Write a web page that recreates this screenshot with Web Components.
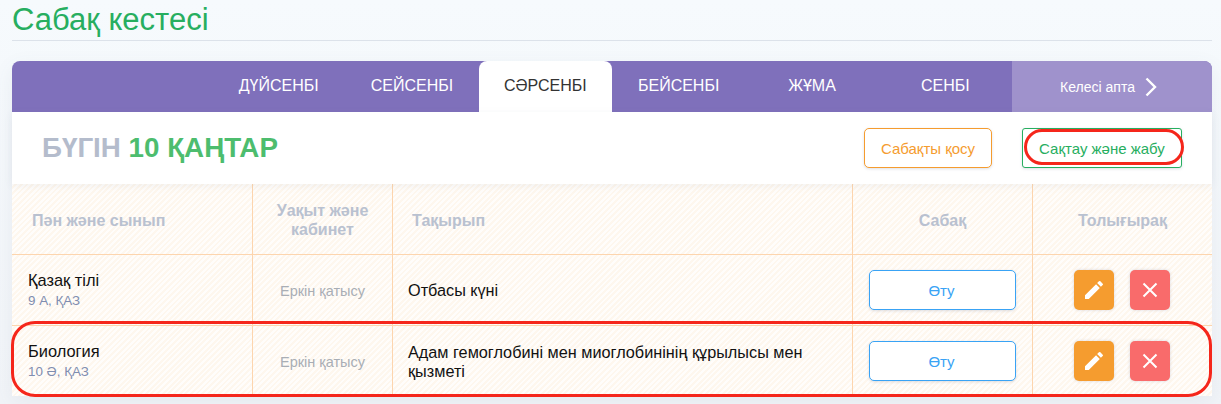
<!DOCTYPE html>
<html lang="kk">
<head>
<meta charset="utf-8">
<title>Сабақ кестесі</title>
<style>
  html, body { margin: 0; height: 404px; overflow: hidden; }
  body {
    background: linear-gradient(#f6fafd, #f1f4f8);
    font-family: "Liberation Sans", Arial, sans-serif;
  }
</style>
</head>
<body>
<schedule-page heading="Сабақ кестесі">
  <week-tabs next="Келесі апта">
    <day-tab>ДҮЙСЕНБІ</day-tab>
    <day-tab>СЕЙСЕНБІ</day-tab>
    <day-tab active>СӘРСЕНБІ</day-tab>
    <day-tab>БЕЙСЕНБІ</day-tab>
    <day-tab>ЖҰМА</day-tab>
    <day-tab>СЕНБІ</day-tab>
  </week-tabs>
  <today-bar label="БҮГІН" date="10 ҚАҢТАР">
    <outline-button color="#f59c2f" width="128">Сабақты қосу</outline-button>
    <outline-button color="#27ae60" width="160" square circled>Сақтау және жабу</outline-button>
  </today-bar>
  <lesson-table>
    <lesson-row subject="Қазақ тілі" group="9 А, ҚАЗ" place="Еркін қатысу" topic="Отбасы күні"></lesson-row>
    <lesson-row circled subject="Биология" group="10 Ә, ҚАЗ" place="Еркін қатысу" topic="Адам гемоглобині мен миоглобинінің құрылысы мен қызметі"></lesson-row>
  </lesson-table>
</schedule-page>

<script>
const COLS = '240px 1px 139px 1px 459px 1px 179px 1px 179px';

class SchedulePage extends HTMLElement {
  connectedCallback() {
    this.attachShadow({ mode: 'open' }).innerHTML = `
      <style>
        :host { display: block; padding: 0 9px 0 12px; }
        h1 {
          margin: 0; height: 40px; box-sizing: content-box;
          font: 400 31px/40px "Liberation Sans", Arial, sans-serif;
          color: #27ae60; border-bottom: 1px solid #dce2ea;
        }
        .card {
          margin-top: 20px; border-radius: 8px 8px 0 0;
          box-shadow: 0 6px 20px rgba(90, 100, 130, .08);
        }
      </style>
      <h1>${this.getAttribute('heading')}</h1>
      <div class="card"><slot></slot></div>`;
  }
}

class WeekTabs extends HTMLElement {
  connectedCallback() {
    this.attachShadow({ mode: 'open' }).innerHTML = `
      <style>
        :host {
          display: flex; height: 51px; padding-left: 200px;
          background: #7f70bb; border-radius: 8px 8px 0 0; overflow: hidden;
        }
        .days { flex: 1; display: grid; grid-template-columns: repeat(6, 1fr); }
        .next {
          width: 200px; background: #9f92cc; color: #fff;
          display: flex; align-items: center; justify-content: center; gap: 9px;
          font-size: 14px; padding-right: 6px; box-sizing: border-box;
        }
        svg { display: block; }
      </style>
      <div class="days"><slot></slot></div>
      <div class="next">${this.getAttribute('next')}
        <svg width="14" height="20" viewBox="0 0 14 20" fill="none" stroke="#fff" stroke-width="2.4">
          <path d="M2.5 1.5 L11 10 L2.5 18.5"/>
        </svg>
      </div>`;
  }
}

class DayTab extends HTMLElement {
  connectedCallback() {
    this.attachShadow({ mode: 'open' }).innerHTML = `
      <style>
        :host {
          display: flex; align-items: center; justify-content: center;
          font-size: 16px; color: #fff; padding-bottom: 2px; box-sizing: border-box;
        }
        :host([active]) { background: #fff; color: #333; border-radius: 8px 8px 0 0; }
      </style>
      <slot></slot>`;
  }
}

class TodayBar extends HTMLElement {
  connectedCallback() {
    this.attachShadow({ mode: 'open' }).innerHTML = `
      <style>
        :host {
          display: flex; align-items: center; height: 72px; background: #fff;
          padding: 0 30px 0 30px; box-sizing: border-box; position: relative;
          box-shadow: 0 2px 8px rgba(90, 100, 130, .08);
        }
        .date { flex: 1; font-size: 27.75px; font-weight: 700; color: #b4bccc; padding-bottom: 1px; }
        .date b { color: #4dbd6e; }
        .btns { display: flex; gap: 30px; }
      </style>
      <div class="date">${this.getAttribute('label')} <b>${this.getAttribute('date')}</b></div>
      <div class="btns"><slot></slot></div>`;
  }
}

class OutlineButton extends HTMLElement {
  connectedCallback() {
    const color = this.getAttribute('color');
    this.attachShadow({ mode: 'open' }).innerHTML = `
      <style>
        :host {
          display: flex; align-items: center; justify-content: center; position: relative;
          width: ${this.getAttribute('width')}px; height: 40px; box-sizing: border-box;
          background: #fff; border: 1px solid ${color}; color: ${color};
          border-radius: 5px; font-size: 15px;
          box-shadow: 0 1px 3px rgba(90, 100, 130, .2);
        }
        :host([square]) { border-radius: 3px; }
        .ring {
          position: absolute; left: 1px; right: -3px; top: 0; bottom: 2px;
          border: 3px solid #f5261b; border-radius: 19px;
        }
      </style>
      <slot></slot>
      ${this.hasAttribute('circled') ? '<div class="ring"></div>' : ''}`;
  }
}

class LessonTable extends HTMLElement {
  connectedCallback() {
    this.attachShadow({ mode: 'open' }).innerHTML = `
      <style>
        :host {
          display: block;
          background: repeating-linear-gradient(135deg, #fffdfb 0 2px, #fef7ee 2px 4px);
          font-size: 16px;
        }
        .head {
          display: grid; grid-template-columns: ${COLS}; height: 70px;
          font-weight: 700; color: #b9c1d0; border-bottom: 1px solid #fdd5ae;
        }
        .head > div { display: flex; align-items: center; justify-content: center; text-align: center; line-height: 19px; padding-top: 2px; box-sizing: border-box; }
        .head > .l { justify-content: flex-start; text-align: left; padding-left: 20px; }
        .head > .topic { padding-left: 19px; }
        .head > .sep { background: #fdd5ae; padding: 0; }
      </style>
      <div class="head">
        <div class="l">Пән және сынып</div><div class="sep"></div>
        <div>Уақыт және<br>кабинет</div><div class="sep"></div>
        <div class="l topic">Тақырып</div><div class="sep"></div>
        <div>Сабақ</div><div class="sep"></div>
        <div>Толығырақ</div>
      </div>
      <slot></slot>`;
  }
}

class LessonRow extends HTMLElement {
  connectedCallback() {
    const a = n => this.getAttribute(n);
    this.attachShadow({ mode: 'open' }).innerHTML = `
      <style>
        :host {
          display: grid; grid-template-columns: ${COLS}; height: 71px; box-sizing: border-box;
          border-bottom: 1px solid #fdd5ae; position: relative;
        }
        :host(:last-child) { border-bottom: 0; height: 70px; }
        .sep { background: #fdd5ae; }
        .cell { display: flex; align-items: center; justify-content: center; }
        .subject { flex-direction: column; align-items: flex-start; padding-left: 16px; box-sizing: border-box; }
        .name { font-size: 16.4px; line-height: 20px; color: #111; }
        .group { font-size: 13.4px; line-height: 19px; color: #7f8db0; margin-top: 1px; }
        .place { font-size: 14.5px; color: #a9aeb5; padding-top: 2px; box-sizing: border-box; }
        .topic { justify-content: flex-start; padding: 1px 40px 0 15px; font-size: 16.25px; line-height: 19px; color: #111; box-sizing: border-box; }
        .go {
          width: 147px; height: 40px; box-sizing: border-box; display: flex;
          align-items: center; justify-content: center; margin-bottom: 1px; padding: 1px 2px 0 0;
          background: #fff; border: 1px solid #39a3f5; border-radius: 5px; color: #39a3f5; font-size: 15px;
          box-shadow: 0 1px 3px rgba(90, 100, 130, .2);
        }
        .tools { gap: 16px; margin-bottom: 1px; padding-right: 2px; box-sizing: border-box; }
        .tool {
          width: 40px; height: 40px; border-radius: 5px; display: flex;
          align-items: center; justify-content: center;
          box-shadow: 0 0 3px rgba(90, 100, 130, .25);
        }
        .edit { background: #f59c2f; }
        .del { background: #f96b6b; }
        .ring {
          position: absolute; left: -1px; right: 0; top: -5px; bottom: -1px;
          border: 3px solid #f5261b; border-radius: 24px; pointer-events: none;
        }
      </style>
      <div class="cell subject"><div class="name">${a('subject')}</div><div class="group">${a('group')}</div></div>
      <div class="sep"></div>
      <div class="cell place">${a('place')}</div>
      <div class="sep"></div>
      <div class="cell topic"><div>${a('topic')}</div></div>
      <div class="sep"></div>
      <div class="cell"><div class="go">Өту</div></div>
      <div class="sep"></div>
      <div class="cell tools">
        <div class="tool edit">
          <svg width="24" height="24" viewBox="0 0 24 24" fill="#fff"><path d="M3 17.25V21h3.75L17.81 9.94l-3.75-3.75L3 17.25zM20.71 7.04a1 1 0 0 0 0-1.41l-2.34-2.34a1 1 0 0 0-1.41 0l-1.83 1.83 3.75 3.75 1.83-1.83z"/></svg>
        </div>
        <div class="tool del">
          <svg width="16" height="16" viewBox="0 0 16 16" stroke="#fff" stroke-width="2" fill="none"><path d="M1.5 1.5 L14.5 14.5 M14.5 1.5 L1.5 14.5"/></svg>
        </div>
      </div>
      ${this.hasAttribute('circled') ? '<div class="ring"></div>' : ''}`;
  }
}

customElements.define('schedule-page', SchedulePage);
customElements.define('week-tabs', WeekTabs);
customElements.define('day-tab', DayTab);
customElements.define('today-bar', TodayBar);
customElements.define('outline-button', OutlineButton);
customElements.define('lesson-table', LessonTable);
customElements.define('lesson-row', LessonRow);
</script>
</body>
</html>
